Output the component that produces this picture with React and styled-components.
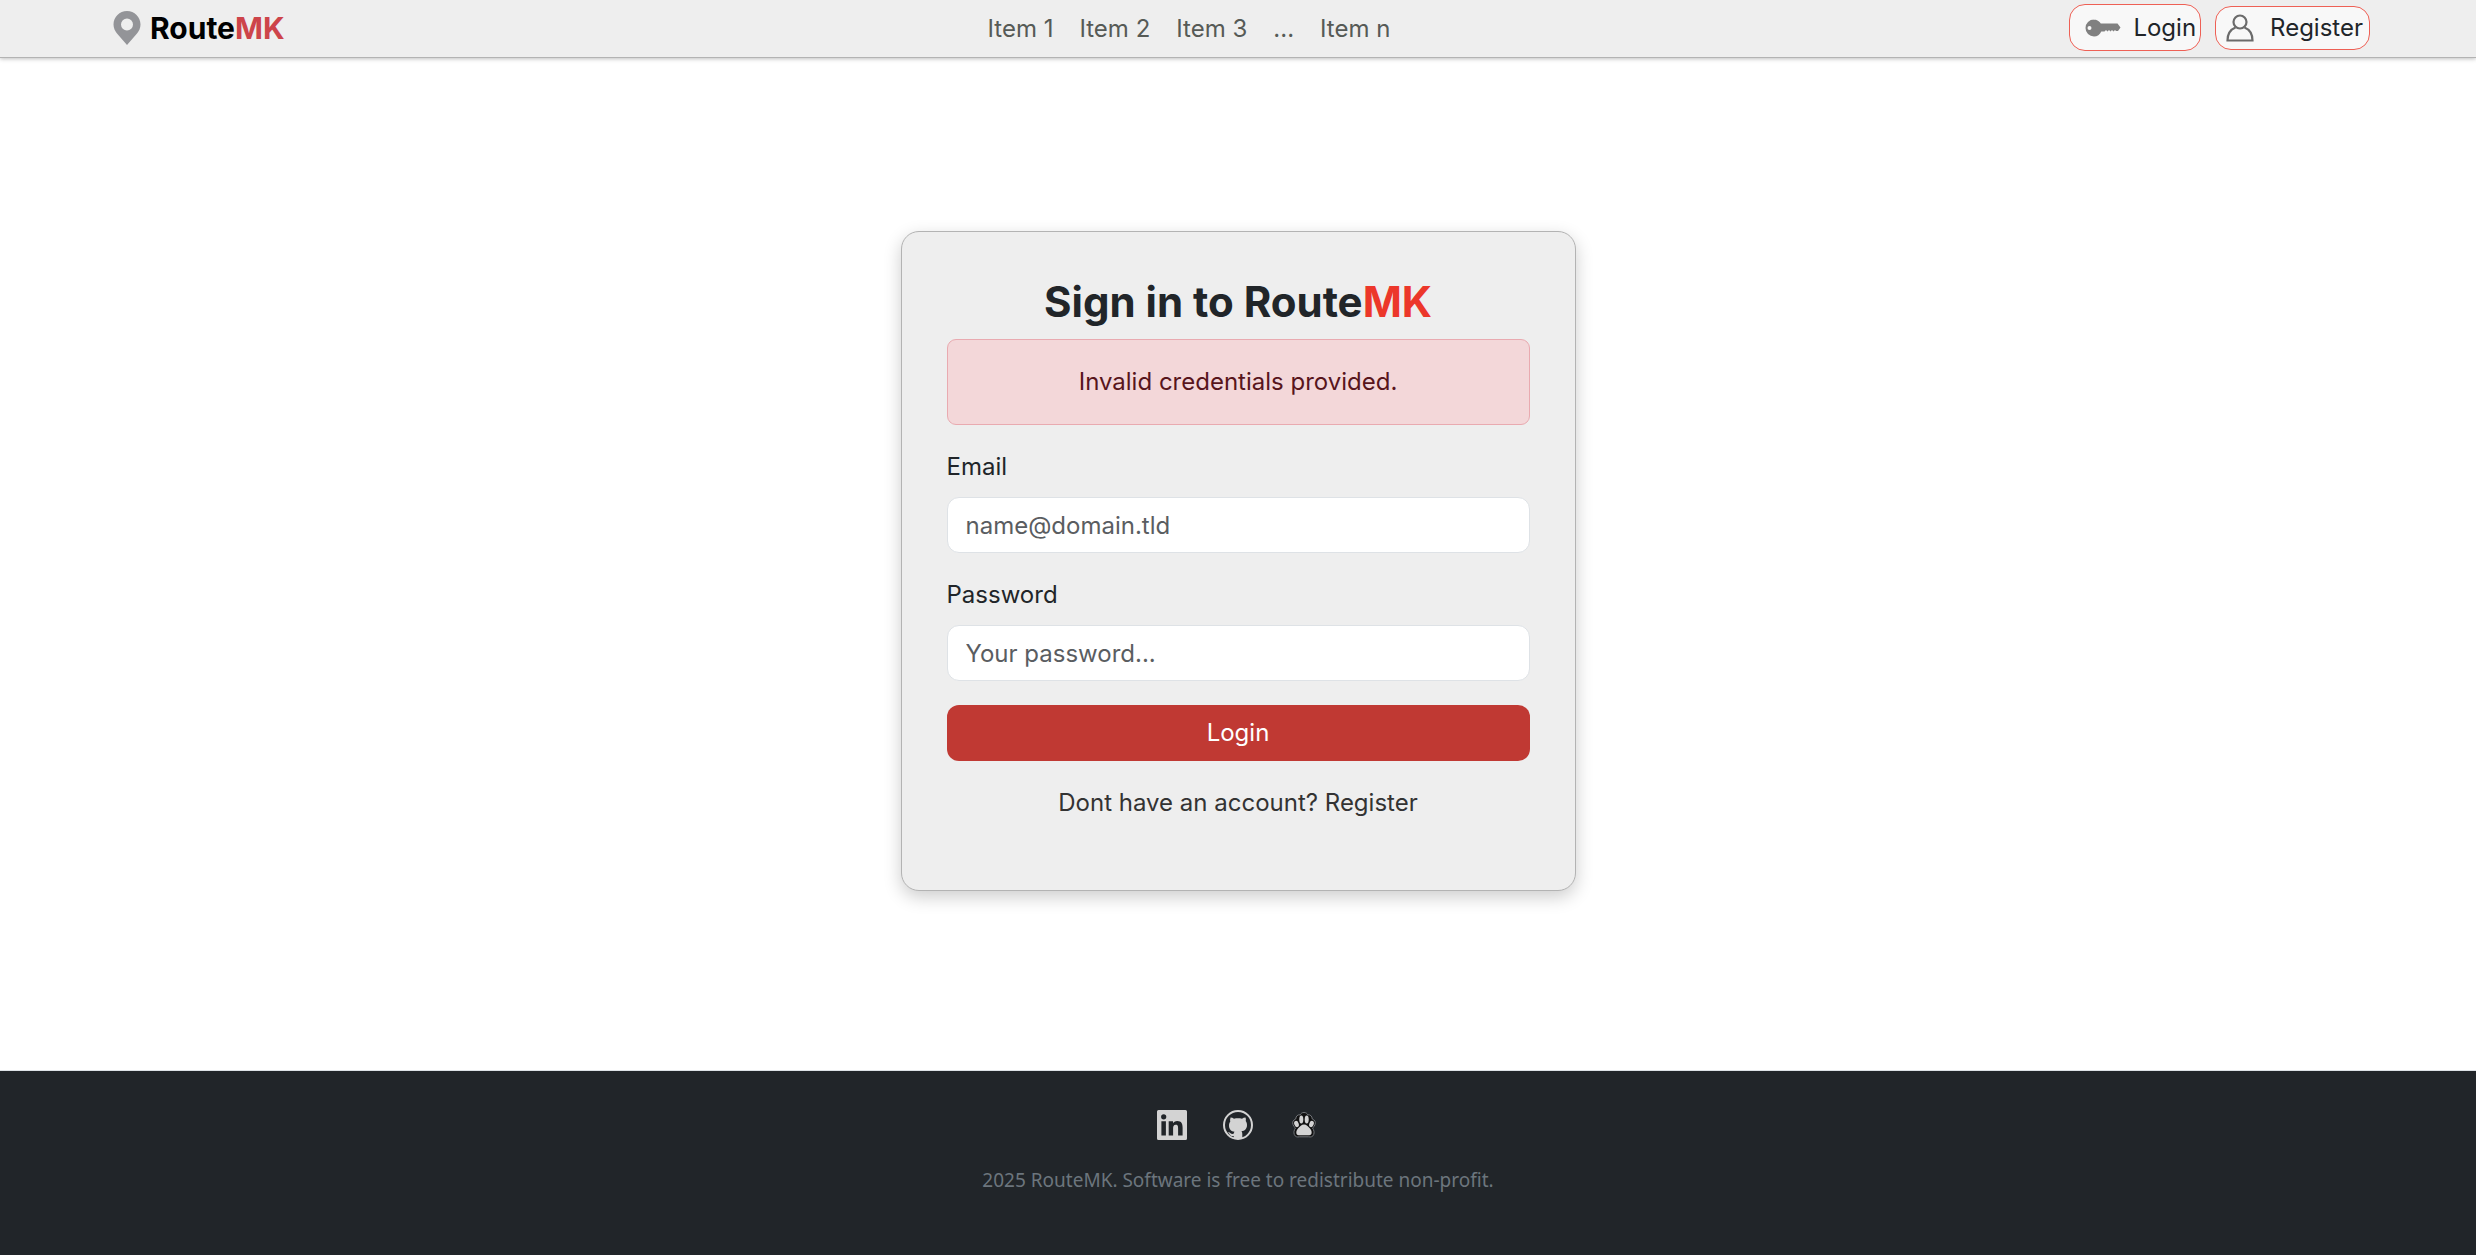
import React, { useState } from "react";
import styled, { createGlobalStyle } from "styled-components";

const GlobalStyle = createGlobalStyle`
  * {
    box-sizing: border-box;
  }

  body {
    margin: 0;
    background-color: #fff;
    color: #212529;
    font-family: Inter, "Liberation Sans", sans-serif;
    font-size: 24px;
    line-height: 36px;
  }

  a {
    color: inherit;
    text-decoration: none;
  }
`;

const Page = styled.div`
  display: flex;
  flex-direction: column;
  min-height: 100vh;
`;

const Header = styled.header`
  display: flex;
  align-items: center;
  justify-content: space-between;
  height: 58px;
  padding: 0 106px 2px 112px;
  background-color: #eee;
  border-bottom: 1px solid #b3b3b3;
  box-shadow: 0 1px 4px rgba(0, 0, 0, 0.25);
`;

const Actions = styled.div`
  display: flex;
  align-items: center;
  gap: 14px;
`;

const Brand = styled.a`
  display: flex;
  align-items: center;
  gap: 8px;
  margin-right: 24px;
  color: #000;
  font-size: 30px;
  font-weight: 700;
`;

const BrandAccent = styled.span`
  color: #cd444a;
`;

const Nav = styled.nav`
  display: flex;
  gap: 26px;
  padding-top: 2px;
  color: #565a56;
`;

const PillLink = styled.a`
  display: flex;
  align-items: center;
  gap: ${(props) => (props.$large ? "12px" : "16px")};
  height: ${(props) => (props.$large ? "47px" : "44px")};
  padding: ${(props) => (props.$large ? "0 4px 0 14px" : "0 6px 0 10px")};
  background-color: #f8f8f8;
  border: 1px solid #ee6055;
  border-radius: 16px;
`;

const Main = styled.main`
  display: flex;
  flex: 1;
  align-items: center;
  justify-content: center;
  padding: 24px 24px 30px;
`;

const Card = styled.form`
  display: flex;
  flex-direction: column;
  width: 100%;
  max-width: 675px;
  padding: 44px 45px 69px;
  background-color: #eee;
  border: 1px solid #b3b3b3;
  border-radius: 18px;
  box-shadow: 0 6px 18px rgba(0, 0, 0, 0.2);
`;

const Title = styled.h1`
  margin: 0 0 12px;
  font-size: 42px;
  line-height: 51px;
  font-weight: 700;
  text-align: center;
`;

const TitleAccent = styled.span`
  color: #ec372a;
`;

const Alert = styled.div`
  margin-bottom: 24px;
  padding: 24px;
  background-color: #f3d7d9;
  border: 1px solid #e9aab0;
  border-radius: 9px;
  color: #58151c;
  text-align: center;
`;

const Field = styled.div`
  display: flex;
  flex-direction: column;
  gap: 12px;
  margin-bottom: 24px;
`;

const Input = styled.input`
  width: 100%;
  height: 56px;
  padding: 0 18px;
  background-color: #fff;
  border: 1px solid #dee2e6;
  border-radius: 12px;
  color: #212529;
  font: inherit;

  &::placeholder {
    color: #5a5d61;
    opacity: 1;
  }
`;

const SubmitButton = styled.button`
  height: 56px;
  margin-bottom: 24px;
  background-color: #c03933;
  border: 0;
  border-radius: 12px;
  color: #fff;
  font: inherit;
  cursor: pointer;
`;

const Hint = styled.p`
  margin: 0;
  color: #333;
  text-align: center;
`;

const Footer = styled.footer`
  display: flex;
  flex-direction: column;
  align-items: center;
  gap: 24px;
  height: 185px;
  padding-top: 39px;
  background-color: #212529;
  border-top: 1px solid #dee2e6;
`;

const Socials = styled.div`
  display: flex;
  gap: 36px;
  color: #d3d3d3;

  a {
    display: flex;
  }
`;

const Copyright = styled.p`
  margin: 0;
  color: #6c757d;
  font-family: "Noto Sans", sans-serif;
  font-size: 19px;
  line-height: 32px;
`;

const PinIcon = () => (
  <svg width="30" height="36" viewBox="0 0 30 36" aria-hidden="true">
    <path
      fill="#939498"
      fillRule="evenodd"
      d="M15 1C7.500 1 1.500 7 1.500 14.500c0 3.500 1.500 6.500 3.500 9L15 35l10-11.500c2-2.500 3.500-5.500 3.500-9C28.500 7 22.500 1 15 1zm0 7.500a6 6 0 1 1 0 12a6 6 0 1 1 0-12z"
    />
  </svg>
);

const KeyIcon = () => (
  <svg width="37" height="20" viewBox="0 0 37 20" aria-hidden="true">
    <path
      fill="#808080"
      fillRule="evenodd"
      d="M9.500 1.500c3.500 0 6 1.700 7.300 4H33.500l3 4l-2.500 3.500h-2l-1-1l-1.500 1.500l-1.500-1.500l-1.500 1.500l-1.500-1.500l-1.500 1.500l-1.500-1.500l-1.500 1.500h-3.200c-1.300 3-4 5-7.300 5a8.500 8.500 0 0 1 0-17zM5.500 8a2 2 0 1 0 0 4a2 2 0 1 0 0-4z"
    />
  </svg>
);

const UserIcon = () => (
  <svg
    width="28"
    height="28"
    viewBox="0 0 28 28"
    fill="none"
    stroke="#6b6b6b"
    strokeWidth="2.2"
    aria-hidden="true"
  >
    <circle cx="14" cy="8" r="6.500" />
    <path d="M9.500 13.500C4.500 15.500 1.500 20 1.500 26.500h25c0-6.500-3-11-8-13" />
  </svg>
);

const LinkedinIcon = () => (
  <svg width="30" height="30" viewBox="0 0 30 30" aria-hidden="true">
    <path
      fill="#d3d3d3"
      fillRule="evenodd"
      d="M1.500 0h27A1.500 1.500 0 0 1 30 1.500v27a1.500 1.500 0 0 1-1.500 1.500h-27A1.500 1.500 0 0 1 0 28.500v-27A1.500 1.500 0 0 1 1.500 0zM4.400 11.300v14.200h4.500V11.300zM6.700 4.200a2.600 2.600 0 1 0 0 5.200a2.600 2.600 0 1 0 0-5.200zM11.700 11.300v14.200h4.400v-7c0-1.900.4-3.700 2.700-3.700s2.300 2.100 2.300 3.800v6.900h4.500v-7.800c0-3.800-.9-6.700-5.400-6.700c-2.100 0-3.600 1.100-4.200 2.200v-1.900z"
    />
  </svg>
);

const GithubIcon = () => (
  <svg width="30" height="30" viewBox="0 0 30 30" aria-hidden="true">
    <circle cx="15" cy="15" r="14" fill="none" stroke="#d3d3d3" strokeWidth="2" />
    <path
      fill="#d3d3d3"
      d="M7.500 7.500c1.300 0 2.500.5 3.500 1.200c2.600-.6 5.400-.6 8 0c1-.7 2.200-1.200 3.500-1.200c.5 1.300.5 2.500.2 3.400c1 1.200 1.300 2.500 1.300 4c0 4-2.300 5.800-5.500 6.300c.6.700.8 1.500.8 2.500V29h-8.600v-3c-2.500.3-3.700-.7-4.400-2.300c-.3-.7-.8-1.200-1.500-1.700c2-.4 2.600 2.500 5.900 1.800c0-.8.300-1.600.8-2.100c-3.200-.5-5.500-2.300-5.500-6.300c0-1.500.3-2.800 1.300-4c-.3-.9-.3-2.100.2-3.400z"
    />
  </svg>
);

const PawIcon = () => (
  <svg width="30" height="30" viewBox="0 0 30 30" aria-hidden="true">
    <path
      fill="#111"
      stroke="#73767a"
      strokeWidth="1"
      d="M15 2.500c2 0 3 .8 3.700 2.300c2.800-.3 4.300 1.300 4.600 4.200c2.500 1 3.700 3 2.700 5.500c-.5 1.600-1.200 2.700-2.500 3.500c1.500 2 2 4.500 1.200 6.500c-.8 2.300-3 2.800-5 2.300h-9.400c-2 .5-4.200 0-5-2.300c-.8-2-.3-4.500 1.200-6.500C5.200 17.200 4.500 16.100 4 14.500c-1-2.500.2-4.500 2.700-5.500c.3-2.900 1.800-4.500 4.600-4.200C12 3.300 13 2.500 15 2.500z"
    />
    <g fill="#d3d3d3">
      <ellipse cx="12.300" cy="9.500" rx="2" ry="4" />
      <ellipse cx="17.700" cy="9.500" rx="2" ry="4" />
      <ellipse cx="7.500" cy="14" rx="2.200" ry="3.200" transform="rotate(-20 7.500 14)" />
      <ellipse cx="22.500" cy="14" rx="2.200" ry="3.200" transform="rotate(20 22.500 14)" />
      <path d="M15 14.500c2.500 0 4 2.200 6 4c2.200 2.200 2.500 6.700-.8 6.700H9.800c-3.300 0-3-4.500-.8-6.700c2-1.800 3.500-4 6-4z" />
    </g>
  </svg>
);

const navItems = ["Item 1", "Item 2", "Item 3", "...", "Item n"];

export default function App() {
  const [email, setEmail] = useState("");
  const [password, setPassword] = useState("");

  const onSubmit = (e) => {
    e.preventDefault();
  };

  return (
    <Page>
      <GlobalStyle />
      <Header>
        <Brand href="#home">
          <PinIcon />
          <span>
            Route<BrandAccent>MK</BrandAccent>
          </span>
        </Brand>
        <Nav>
          {navItems.map((item) => (
            <a key={item} href="#item">
              {item}
            </a>
          ))}
        </Nav>
        <Actions>
          <PillLink href="#login" $large>
            <KeyIcon />
            Login
          </PillLink>
          <PillLink href="#register">
            <UserIcon />
            Register
          </PillLink>
        </Actions>
      </Header>
      <Main>
        <Card onSubmit={onSubmit}>
          <Title>
            Sign in to Route<TitleAccent>MK</TitleAccent>
          </Title>
          <Alert role="alert">Invalid credentials provided.</Alert>
          <Field>
            <label htmlFor="email">Email</label>
            <Input
              id="email"
              type="email"
              placeholder="name@domain.tld"
              value={email}
              onChange={(e) => setEmail(e.target.value)}
            />
          </Field>
          <Field>
            <label htmlFor="password">Password</label>
            <Input
              id="password"
              type="password"
              placeholder="Your password..."
              value={password}
              onChange={(e) => setPassword(e.target.value)}
            />
          </Field>
          <SubmitButton type="submit">Login</SubmitButton>
          <Hint>
            Dont have an account? <a href="#register">Register</a>
          </Hint>
        </Card>
      </Main>
      <Footer>
        <Socials>
          <a href="#linkedin" aria-label="LinkedIn">
            <LinkedinIcon />
          </a>
          <a href="#github" aria-label="GitHub">
            <GithubIcon />
          </a>
          <a href="#paw" aria-label="Paw">
            <PawIcon />
          </a>
        </Socials>
        <Copyright>
          2025 RouteMK. Software is free to redistribute non-profit.
        </Copyright>
      </Footer>
    </Page>
  );
}
